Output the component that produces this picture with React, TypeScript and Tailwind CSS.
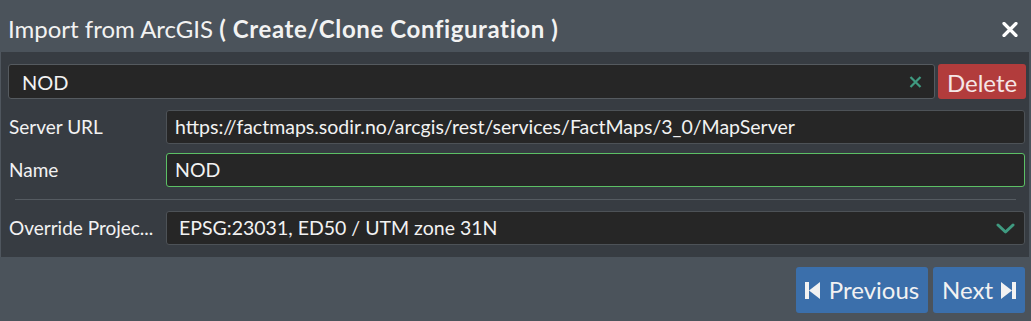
import React from "react";

export default function App() {
  const font = { fontFamily: "Lato, 'Open Sans', sans-serif" };
  return (
    <div className="w-[1031px] h-[321px] bg-[#4b535b] flex flex-col text-[#f2f2f2]" style={font}>
      {/* Header */}
      <div className="h-[52px] flex items-center justify-between pl-[8px] pr-[13px]">
        <div className="text-[24px] leading-none pt-[6px]">
          <span>Import from ArcGIS </span>
          <span className="font-bold tracking-[0.6px]">( Create/Clone Configuration )</span>
        </div>
        <svg width="16" height="15" viewBox="0 0 16 15" className="mt-[6px]">
          <path d="M2 1.5 L14 13.5 M14 1.5 L2 13.5" stroke="#ffffff" strokeWidth="3.2" strokeLinecap="round" />
        </svg>
      </div>

      {/* Body */}
      <div className="h-[205px] w-[1029px] bg-[#373c42] border-l border-[#4f565e] flex flex-col pt-[12px] pl-[7px] pr-[3px]">
        <div className="flex gap-[3px] h-[35px]">
          <div className="flex-1 bg-[#262626] border border-[#555a5f] rounded-[3px] flex items-center pl-[13px] pr-[12px]">
            <span className="flex-1 text-[20px]">NOD</span>
            <svg width="13" height="12" viewBox="0 0 13 12">
              <path d="M1.5 1 L11.5 11 M11.5 1 L1.5 11" stroke="#3f9a80" strokeWidth="2.2" />
            </svg>
          </div>
          <button className="w-[88px] bg-[#b23c3c] rounded-[3px] text-[24px] text-[#f5e6e6] flex items-center justify-center pt-[2px]">
            Delete
          </button>
        </div>

        <div className="flex items-center mt-[11px] h-[34px]">
          <div className="w-[158px] text-[19px] pl-px">Server URL</div>
          <div className="flex-1 h-full bg-[#262626] border border-[#4d5257] rounded-[3px] flex items-center pl-[8px] text-[19.5px] mr-[1px]">
            https://factmaps.sodir.no/arcgis/rest/services/FactMaps/3_0/MapServer
          </div>
        </div>

        <div className="flex items-center mt-[9px] h-[34px]">
          <div className="w-[158px] text-[19px] pl-px">Name</div>
          <div className="flex-1 h-full bg-[#262626] border border-[#5cc065] rounded-[3px] flex items-center pl-[8px] text-[19.5px] mr-[1px]">
            NOD
          </div>
        </div>

        <div className="mt-[12px] mx-[7px] mr-[10px] h-px bg-[#555b61]" />

        <div className="flex items-center mt-[11px] h-[34px]">
          <div className="w-[158px] text-[19px] pl-px whitespace-nowrap">Override Projec...</div>
          <div className="flex-1 h-full bg-[#262626] border border-[#4d5257] rounded-[3px] flex items-center pl-[12px] pr-[9px] text-[19.5px] mr-[1px]">
            <span className="flex-1">EPSG:23031, ED50 / UTM zone 31N</span>
            <svg width="19" height="11" viewBox="0 0 19 11">
              <path d="M2 2 L9.5 9 L17 2" stroke="#3f9a80" strokeWidth="3" fill="none" strokeLinecap="round" strokeLinejoin="round" />
            </svg>
          </div>
        </div>
      </div>

      {/* Footer */}
      <div className="flex-1 flex justify-end items-start pt-[10px] pr-[6px] gap-[5px]">
        <button className="h-[46px] w-[132px] bg-[#3b6fab] rounded-[3px] flex items-center justify-center gap-[9px] text-[24px] text-[#f2f2f2]">
          <svg width="15" height="17" viewBox="0 0 15 17">
            <rect x="0" y="0" width="4" height="17" fill="#f2f2f2" />
            <path d="M15 0 L4 8.5 L15 17 Z" fill="#f2f2f2" />
          </svg>
          <span>Previous</span>
        </button>
        <button className="h-[46px] w-[92px] bg-[#3b6fab] rounded-[3px] flex items-center justify-center gap-[8px] text-[24px] text-[#f2f2f2]">
          <span>Next</span>
          <svg width="15" height="17" viewBox="0 0 15 17">
            <path d="M0 0 L11 8.5 L0 17 Z" fill="#f2f2f2" />
            <rect x="11" y="0" width="4" height="17" fill="#f2f2f2" />
          </svg>
        </button>
      </div>
    </div>
  );
}
